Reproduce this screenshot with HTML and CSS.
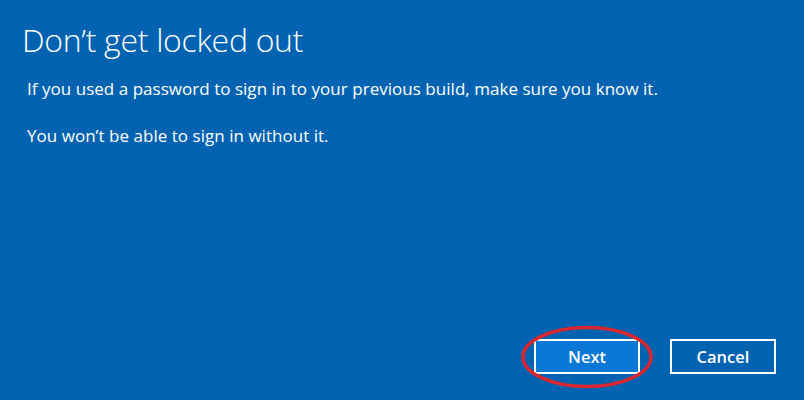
FILE: index.html
```html
<!DOCTYPE html>
<html lang="en">
<head>
<meta charset="utf-8">
<link rel="stylesheet" href="styles.css">
</head>
<body>
<div class="page">
  <h1 class="title">Don’t get locked out</h1>
  <p class="text first">If you used a password to sign in to your previous build, make sure you know it.</p>
  <p class="text">You won’t be able to sign in without it.</p>
  <div class="spacer"></div>
  <div class="actions">
    <div class="next-wrap">
      <button class="btn primary">Next</button>
      <svg class="ring" width="134" height="64" viewBox="0 0 134 64"><ellipse cx="67" cy="32" rx="64" ry="29.5" fill="none" stroke="#d9262f" stroke-width="3.5"/></svg>
    </div>
    <button class="btn">Cancel</button>
  </div>
</div>
</body>
</html>
```
FILE: styles.css
```css
html, body {
  margin: 0;
  padding: 0;
  background: #0063b1;
}
.page {
  width: 804px;
  height: 400px;
  box-sizing: border-box;
  display: flex;
  flex-direction: column;
  padding: 0 28px 26px 22px;
  color: #fff;
  font-family: "Open Sans", "Noto Sans", sans-serif;
}
.title {
  margin: 20px 0 0 0;
  font-size: 32px;
  font-weight: 300;
  line-height: 40px;
  letter-spacing: -0.3px;
}
.text {
  margin: 0 0 0 5px;
  font-size: 17px;
  line-height: 20px;
  letter-spacing: 0.03px;
}
.text.first {
  margin-top: 19px;
  margin-bottom: 27px;
}
.spacer { flex: 1; }
.actions {
  display: flex;
  justify-content: flex-end;
  align-items: center;
  gap: 30px;
}
.next-wrap {
  position: relative;
}
.btn {
  width: 106px;
  height: 35px;
  box-sizing: border-box;
  border: 2px solid #fff;
  background: transparent;
  color: #fff;
  font-family: "Open Sans", "Noto Sans", sans-serif;
  font-size: 16.5px;
  font-weight: 600;
  padding: 0;
  display: block;
}
.btn.primary {
  background: #0a78d7;
}
.ring {
  position: absolute;
  left: -14px;
  top: -14px;
  pointer-events: none;
}
```
